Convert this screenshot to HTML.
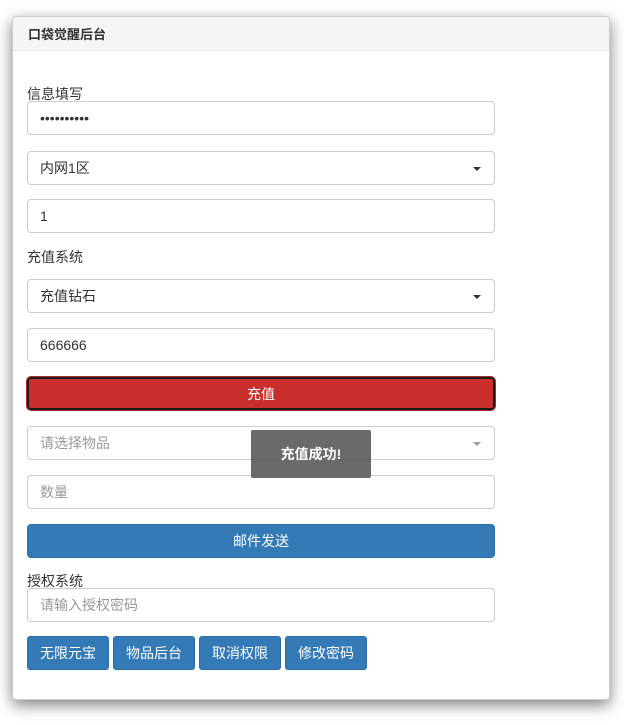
<!DOCTYPE html>
<html><head><meta charset="utf-8"><style>
*{box-sizing:border-box}
body{margin:0;width:624px;height:725px;background:#fff;font-family:"Liberation Sans","Noto Sans CJK SC",sans-serif;font-size:14px;color:#333;position:relative;overflow:hidden}
.panel{position:absolute;left:12px;top:16px;width:598px;height:684px;border:1px solid #ccc;border-radius:4px;box-shadow:0 5px 15px rgba(0,0,0,.5);background:#fff}
.hd{height:34px;background:#f5f5f5;border-bottom:1px solid #eee;font-weight:bold;font-size:13px;padding:7px 15px;border-radius:4px 4px 0 0}
.a{position:absolute;left:27px;width:468px}
.in{height:34px;border:1px solid #ccc;border-radius:4px;padding:6px 12px;line-height:20px;background:#fff}
.ph{color:#999}
.caret{position:absolute;right:13px;top:15px;border-left:4px solid transparent;border-right:4px solid transparent;border-top:4px solid #333}
.lbl{position:absolute;left:27px}
.btn{height:34px;border-radius:4px;color:#fff;text-align:center;line-height:32px;border:1px solid #2e6da4;background:#337ab7}
.red{background:#c9302c;border:2px solid #1a1a1a;outline:1px solid #ac2925;line-height:30px}
.sb{position:absolute;top:636px;width:82px;height:34px;background:#337ab7;border:1px solid #2e6da4;border-radius:3px;color:#fff;text-align:center;line-height:32px}
.toast{position:absolute;left:251px;top:430px;width:120px;height:48px;background:rgba(90,90,90,.9);border-radius:2px;color:#fff;text-align:center;line-height:48px;font-size:14px;font-weight:bold}
</style></head><body>
<div class="panel"><div class="hd">口袋觉醒后台</div></div>
<div class="lbl" style="top:84px">信息填写</div>
<div class="a in" style="top:101px">••••••••••</div>
<div class="a in" style="top:151px">内网1区<span class="caret"></span></div>
<div class="a in" style="top:199px">1</div>
<div class="lbl" style="top:247px">充值系统</div>
<div class="a in" style="top:279px">充值钻石<span class="caret"></span></div>
<div class="a in" style="top:328px">666666</div>
<div class="a btn red" style="top:377px;height:33px">充值</div>
<div class="a in ph" style="top:426px">请选择物品<span class="caret" style="border-top-color:#999"></span></div>
<div class="a in ph" style="top:475px">数量</div>
<div class="a btn" style="top:524px">邮件发送</div>
<div class="lbl" style="top:571px">授权系统</div>
<div class="a in ph" style="top:588px">请输入授权密码</div>
<div class="sb" style="left:27px">无限元宝</div>
<div class="sb" style="left:113px">物品后台</div>
<div class="sb" style="left:199px">取消权限</div>
<div class="sb" style="left:285px">修改密码</div>
<div class="toast">充值成功!</div>
</body></html>
